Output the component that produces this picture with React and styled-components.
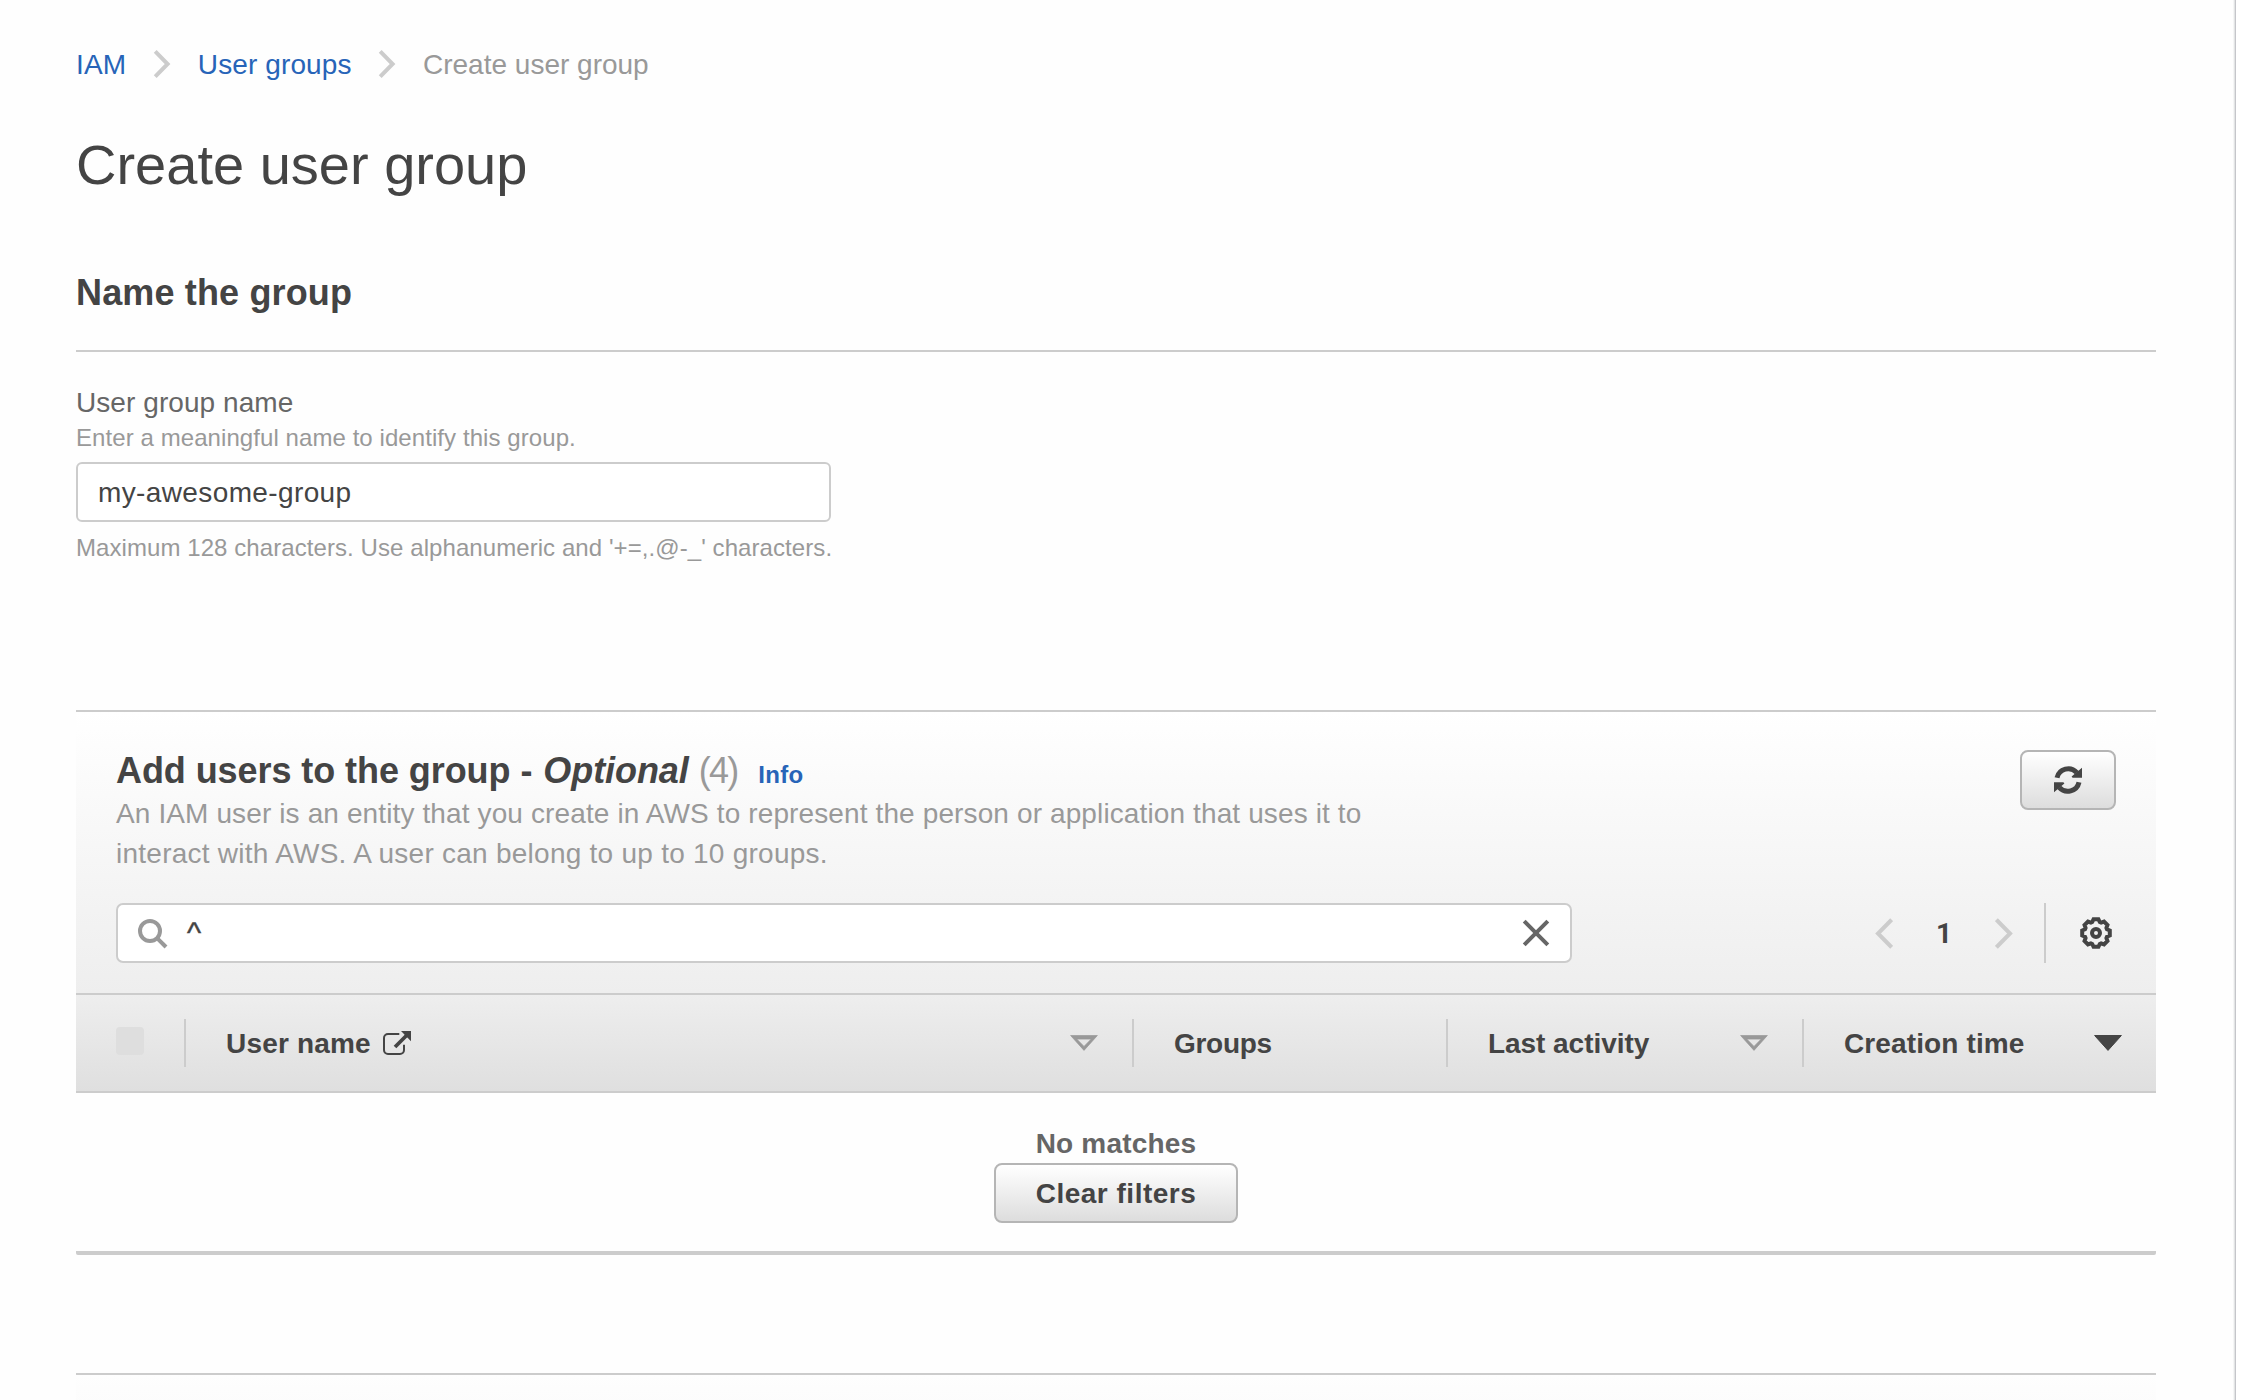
import React from "react";
import styled, { createGlobalStyle } from "styled-components";

const colors = {
  text: "#444",
  label: "#666",
  muted: "#999",
  line: "#ccc",
  buttonLine: "#b5b5b5",
  link: "#2764b8",
};

const GlobalStyle = createGlobalStyle`
  *, *::before, *::after { box-sizing: border-box; }
  html, body { margin: 0; background: #fff; }
  body {
    color: ${colors.text};
    font-family: "Liberation Sans", "Helvetica Neue", Arial, sans-serif;
    font-size: 28px;
    overflow: hidden;
  }
  h1, h2, p { margin: 0; }
`;

const Frame = styled.div`
  display: flex;
  height: 1400px;
  overflow: hidden;
`;

const Page = styled.main`
  width: 2233px;
  padding: 44px 77px 0 76px;
  background: #fefefe;
`;

const PageEdge = styled.div`
  width: 3px;
  background: linear-gradient(to right, #f5f6f6 0 1px, #e2e4e5 1px 2px, #c5c6ca 2px 3px);
`;

const Icon = styled.svg`
  display: block;
  flex: none;
  fill: none;
  stroke: currentColor;
`;

/* Breadcrumb and title */

const Breadcrumb = styled.nav`
  display: flex;
  align-items: flex-start;
  height: 41px;
  line-height: 41px;
`;

const Crumb = styled.a`
  width: ${(p) => p.$width};
  letter-spacing: ${(p) => p.$track || "normal"};
  white-space: nowrap;
  color: ${(p) => (p.$current ? colors.muted : colors.link)};
`;

const CrumbArrow = styled.span`
  width: 45px;
  padding-top: 6px;
  color: ${colors.line};
`;

const PageTitle = styled.h1`
  margin-top: 47px;
  font-size: 56px;
  font-weight: 400;
  line-height: 65px;
`;

/* Name section */

const SectionHeading = styled.h2`
  margin-top: 73px;
  padding-bottom: 35px;
  border-bottom: 2px solid ${colors.line};
  font-size: 36px;
  font-weight: 700;
  line-height: 45px;
  letter-spacing: 0.15px;
`;

const Field = styled.div`
  display: flex;
  flex-direction: column;
  width: 760px;
  height: 180px;
  margin-top: 32px;
`;

const FieldLabel = styled.label`
  color: ${colors.label};
  line-height: 37px;
  letter-spacing: 0.07px;
`;

const Hint = styled.span`
  color: ${colors.muted};
  font-size: 24px;
  line-height: 33px;
  letter-spacing: 0.075px;
  white-space: nowrap;
`;

const TextBox = styled.div`
  width: 755px;
  height: 60px;
  margin: 8px 0 9px;
  padding: 13px 20px 0;
  border: 2px solid ${colors.line};
  border-radius: 6px;
  background: #fff;
  line-height: 31px;
  letter-spacing: 0.38px;
`;

/* Users panel */

const Panel = styled.section`
  margin-top: 146px;
  border-top: 2px solid ${colors.line};
  border-bottom: 4px solid ${colors.line};
  border-radius: 0 0 2px 2px;
`;

const PanelHeader = styled.header`
  height: 281px;
  padding: 36px 40px 0;
  background: linear-gradient(#fff, #eee);
`;

const PanelTop = styled.div`
  display: flex;
  justify-content: space-between;
  height: 155px;
`;

const PanelHeading = styled.h2`
  display: flex;
  align-items: baseline;
  font-size: 36px;
  line-height: 45px;
  letter-spacing: -0.07px;
  white-space: nowrap;
`;

const Optional = styled.em`
  margin-left: 11px;
`;

const Count = styled.span`
  margin-left: 10px;
  color: ${colors.muted};
  font-weight: 400;
  letter-spacing: -1.8px;
`;

const InfoLink = styled.a`
  margin-left: 21px;
  color: ${colors.link};
  font-size: 24px;
  line-height: 33px;
  letter-spacing: 0.25px;
`;

const Description = styled.p`
  margin-top: 1px;
  color: ${colors.muted};
  line-height: 40px;
  white-space: nowrap;
`;

const DescriptionLine = styled.span`
  display: block;
  letter-spacing: ${(p) => p.$track};
`;

const Button = styled.button`
  display: flex;
  justify-content: center;
  width: ${(p) => p.$width};
  height: 60px;
  margin: 2px 0 0;
  padding: ${(p) => (p.$iconOnly ? "14px" : "13px")} 0 0;
  border: 2px solid ${colors.buttonLine};
  border-radius: 8px;
  background: linear-gradient(#fff, #ddd);
  color: ${colors.text};
  font: 700 28px/31px "Liberation Sans", "Helvetica Neue", Arial, sans-serif;
  letter-spacing: 0.5px;
`;

const Toolbar = styled.div`
  display: flex;
  justify-content: space-between;
  height: 60px;
`;

const SearchBox = styled.div`
  display: flex;
  width: 1456px;
  height: 60px;
  padding: 12px 20px 0;
  border: 2px solid ${colors.line};
  border-radius: 7px;
  background: #fff;
  line-height: 31px;
`;

const SearchIcon = styled.span`
  padding-top: 2px;
  color: ${colors.muted};
`;

const Query = styled.span`
  flex: 1;
  padding-left: 19px;
  font-size: 30px;
  -webkit-text-stroke: 0.5px ${colors.text};
`;

const ClearIcon = styled.span`
  padding-top: 2px;
  color: ${colors.label};
`;

const Pager = styled.div`
  display: flex;
  align-items: center;
  color: ${colors.line};
`;

const PageNumber = styled.span`
  width: 102px;
  padding-top: 1px;
  color: ${colors.text};
  font: 700 28px/33px Roboto, "Liberation Sans", sans-serif;
  text-align: center;
`;

const PagerDivider = styled.span`
  width: 2px;
  height: 60px;
  margin: 0 34px 0 31px;
  background: ${colors.line};
`;

const SettingsIcon = styled.span`
  margin-right: 4px;
  color: ${colors.text};
`;

/* Table */

const HeadRow = styled.div`
  display: grid;
  grid-template-columns: 110px 948px 314px 356px 352px;
  height: 100px;
  border-top: 2px solid ${colors.line};
  border-bottom: 2px solid ${colors.line};
  background: linear-gradient(#eee, #dfdfdf);
`;

const HeadCell = styled.div`
  display: flex;
  align-items: center;
  padding-left: 40px;
  font-weight: 700;
`;

const HeadLabel = styled.span`
  padding-top: 1px;
  line-height: 41px;
  letter-spacing: ${(p) => p.$track};
  white-space: nowrap;
`;

const LabelIcon = styled.span`
  margin-left: 12px;
`;

const SortIcon = styled.span`
  margin: 0 34px 0 auto;
  color: ${(p) => (p.$active ? colors.text : colors.muted)};
`;

const CellDivider = styled.span`
  width: 2px;
  height: 48px;
  margin-left: ${(p) => (p.$push ? "auto" : "0")};
  background: ${colors.line};
`;

const Checkbox = styled.span`
  width: 28px;
  height: 28px;
  margin-bottom: 4px;
  border-radius: 4px;
  background: #dedede;
`;

const EmptyState = styled.div`
  display: flex;
  flex-direction: column;
  align-items: center;
  height: 158px;
  padding-top: 33px;
`;

const EmptyText = styled.span`
  color: ${colors.label};
  font-weight: 700;
  line-height: 35px;
  letter-spacing: 0.2px;
`;

const NextPanel = styled.section`
  height: 60px;
  margin-top: 118px;
  border-top: 2px solid ${colors.line};
  background: linear-gradient(#fefefe, #fafafa);
`;

/* Icons */

const CrumbChevron = () => (
  <Icon width="18" height="28" viewBox="0 0 18 28" strokeWidth="4">
    <path d="M2.2 1.4 14.6 14 2.2 26.6" />
  </Icon>
);

const PagerChevron = ({ back }) => (
  <Icon width="18" height="31" viewBox="0 0 18 31" strokeWidth="4">
    <path d={back ? "M16.6 1.7 3 15.5 16.6 29.3" : "M1.4 1.7 15 15.5 1.4 29.3"} />
  </Icon>
);

const Magnifier = () => (
  <Icon width="30" height="30" viewBox="0 0 30 30" strokeWidth="4">
    <circle cx="12" cy="12" r="10" />
    <path d="M19.3 19.3 28 28" />
  </Icon>
);

const Cross = () => (
  <Icon width="28" height="28" viewBox="0 0 28 28" strokeWidth="4">
    <path d="M2.2 2.2 25.8 25.8M25.8 2.2 2.2 25.8" />
  </Icon>
);

const Refresh = () => (
  <Icon width="28" height="28" viewBox="0 0 28 28" strokeWidth="5">
    <path d="M3 11.8A11.5 11.5 0 0 1 22.8 6.6M25 16.2A11.5 11.5 0 0 1 5.2 21.4" />
    <path
      d="M28 1.7V11.7H18.6L17.6 10.4ZM0 26.3V16.3H9.4L10.4 17.6Z"
      fill="currentColor"
      stroke="none"
    />
  </Icon>
);

const gearPoints = Array.from({ length: 8 }, (_, i) => i * 45)
  .flatMap((deg) => [
    [14, deg - 10],
    [14, deg + 10],
    [11.6, deg + 19],
    [11.6, deg + 26],
  ])
  .map(([r, deg]) => {
    const a = (deg * Math.PI) / 180;
    return `${(16 + r * Math.cos(a)).toFixed(2)},${(16 + r * Math.sin(a)).toFixed(2)}`;
  })
  .join(" ");

const Gear = () => (
  <Icon width="32" height="32" viewBox="0 0 32 32" strokeWidth="4">
    <polygon points={gearPoints} />
    <circle cx="16" cy="16" r="4" />
  </Icon>
);

const External = () => (
  <Icon width="28" height="24" viewBox="0 0 28 24" strokeWidth="2">
    <path d="M16.3 3H5a4 4 0 0 0-4 4v12a4 4 0 0 0 4 4h12a4 4 0 0 0 4-4v-5.3" />
    <path d="M12 16 24 4" strokeWidth="3.8" />
    <path d="M18 0H28V10.2Z" fill="currentColor" stroke="none" />
  </Icon>
);

const SortTriangle = ({ solid }) => (
  <Icon width="28" height="16" viewBox="0 0 28 16" strokeWidth="1" strokeLinejoin="round">
    <path
      d={solid ? "M.6.5H27.4L14 15.4Z" : "M.6.5H27.4L14 15.4ZM6.8 4.1 14 11.4 21.2 4.1Z"}
      fill="currentColor"
      fillRule="evenodd"
      strokeWidth={solid ? 1 : 0.7}
    />
  </Icon>
);

export default function App() {
  return (
    <Frame>
      <GlobalStyle />
      <Page>
        <Breadcrumb>
          <Crumb $width="76.8px" $track="0.1px">IAM</Crumb>
          <CrumbArrow><CrumbChevron /></CrumbArrow>
          <Crumb $width="180.2px" $track="0.12px">User groups</Crumb>
          <CrumbArrow><CrumbChevron /></CrumbArrow>
          <Crumb $current>Create user group</Crumb>
        </Breadcrumb>
        <PageTitle>Create user group</PageTitle>

        <SectionHeading>Name the group</SectionHeading>
        <Field>
          <FieldLabel>User group name</FieldLabel>
          <Hint>Enter a meaningful name to identify this group.</Hint>
          <TextBox>my-awesome-group</TextBox>
          <Hint>Maximum 128 characters. Use alphanumeric and '+=,.@-_' characters.</Hint>
        </Field>

        <Panel>
          <PanelHeader>
            <PanelTop>
              <div>
                <PanelHeading>
                  Add users to the group - <Optional>Optional</Optional>
                  <Count>(4)</Count>
                  <InfoLink>Info</InfoLink>
                </PanelHeading>
                <Description>
                  <DescriptionLine $track="0.12px">
                    An IAM user is an entity that you create in AWS to represent the person or
                    application that uses it to
                  </DescriptionLine>
                  <DescriptionLine $track="0.25px">
                    interact with AWS. A user can belong to up to 10 groups.
                  </DescriptionLine>
                </Description>
              </div>
              <Button $width="96px" $iconOnly aria-label="Refresh">
                <Refresh />
              </Button>
            </PanelTop>
            <Toolbar>
              <SearchBox>
                <SearchIcon><Magnifier /></SearchIcon>
                <Query>^</Query>
                <ClearIcon><Cross /></ClearIcon>
              </SearchBox>
              <Pager>
                <PagerChevron back />
                <PageNumber>1</PageNumber>
                <PagerChevron />
                <PagerDivider />
                <SettingsIcon><Gear /></SettingsIcon>
              </Pager>
            </Toolbar>
          </PanelHeader>

          <HeadRow>
            <HeadCell>
              <Checkbox />
              <CellDivider $push />
            </HeadCell>
            <HeadCell>
              <HeadLabel $track="0.17px">User name</HeadLabel>
              <LabelIcon><External /></LabelIcon>
              <SortIcon><SortTriangle /></SortIcon>
              <CellDivider />
            </HeadCell>
            <HeadCell>
              <HeadLabel $track="-0.3px">Groups</HeadLabel>
              <CellDivider $push />
            </HeadCell>
            <HeadCell>
              <HeadLabel $track="-0.05px">Last activity</HeadLabel>
              <SortIcon><SortTriangle /></SortIcon>
              <CellDivider />
            </HeadCell>
            <HeadCell>
              <HeadLabel $track="0.12px">Creation time</HeadLabel>
              <SortIcon $active><SortTriangle solid /></SortIcon>
            </HeadCell>
          </HeadRow>

          <EmptyState>
            <EmptyText>No matches</EmptyText>
            <Button $width="244px">Clear filters</Button>
          </EmptyState>
        </Panel>

        <NextPanel />
      </Page>
      <PageEdge />
    </Frame>
  );
}
